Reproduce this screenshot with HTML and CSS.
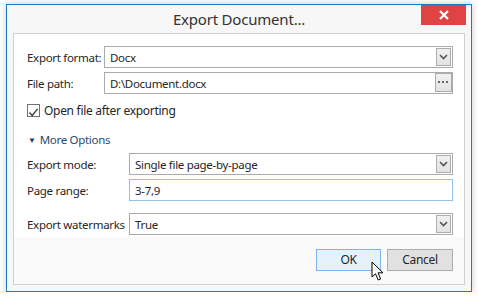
FILE: index.html
```html
<!DOCTYPE html>
<html>
<head>
<meta charset="UTF-8">
<title>Export Document...</title>
<link rel="stylesheet" href="styles.css">
</head>
<body>

<div class="window">
  <div class="titleBar">
    Export Document...
    <div class="closeBtn">
      <svg width="12" height="12" viewBox="0 0 12 12"><path d="M2 2L10 10M10 2L2 10" stroke="#fff" stroke-width="2.2"/></svg>
    </div>
  </div>

  <div class="panel">
    <div class="content">

      <div class="form narrow">
        <label>Export format:</label>
        <div class="field">
          <span>Docx</span>
          <div class="dropBtn"><svg width="9" height="6" viewBox="0 0 9 6"><path d="M1 1L4.5 4.5L8 1" stroke="#555" stroke-width="1.6" fill="none"/></svg></div>
        </div>
        <label>File path:</label>
        <div class="field">
          <span>D:\Document.docx</span>
          <div class="dotsBtn"><svg width="11" height="3" viewBox="0 0 11 3"><rect x="0" y="0" width="2" height="2" fill="#666"/><rect x="4" y="0" width="2" height="2" fill="#666"/><rect x="8" y="0" width="2" height="2" fill="#666"/></svg></div>
        </div>
      </div>

      <div class="checkRow">
        <div class="checkBox"><svg width="11" height="11" viewBox="0 0 11 11"><path d="M1.5 5.5L4.2 8.4L9.6 1.8" stroke="#333" stroke-width="1.3" fill="none"/></svg></div>
        <span>Open file after exporting</span>
      </div>

      <div class="moreRow">
        <span class="arrow">&#9660;</span>
        <span>More Options</span>
      </div>

      <div class="form wide">
        <label>Export mode:</label>
        <div class="field">
          <span>Single file page-by-page</span>
          <div class="dropBtn"><svg width="9" height="6" viewBox="0 0 9 6"><path d="M1 1L4.5 4.5L8 1" stroke="#555" stroke-width="1.6" fill="none"/></svg></div>
        </div>
        <label>Page range:</label>
        <div class="field focused">
          <span>3-7,9</span>
        </div>
        <label class="gapTop">Export watermarks</label>
        <div class="field gapTop">
          <span>True</span>
          <div class="dropBtn"><svg width="9" height="6" viewBox="0 0 9 6"><path d="M1 1L4.5 4.5L8 1" stroke="#555" stroke-width="1.6" fill="none"/></svg></div>
        </div>
      </div>

    </div>

    <div class="footer">
      <div class="btn ok">OK
        <svg class="cursor" width="14" height="21" viewBox="0 0 14 21"><path d="M1 1L1 16L4.5 12.8L7.2 19L9.6 18L7 11.8L12 11.8Z" fill="#fff" stroke="#000" stroke-width="1"/></svg>
      </div>
      <div class="btn">Cancel</div>
    </div>
  </div>
</div>

</body>
</html>
```

FILE: styles.css
```css
body{
  margin:0;
  padding:4px 0 0 6px;
  background:#fff;
  font-family:"Noto Sans", "Open Sans", sans-serif;
  font-size:11.5px;
  letter-spacing:-0.3px;
  color:#262626;
}

.window{
  position:relative;
  width:464px;
  height:286px;
  border:1px solid #1979ca;
  background:#f7f7f7;
  box-shadow:0 0 7px rgba(0,0,0,0.22);
}

.titleBar{
  height:28px;
  line-height:28px;
  text-align:center;
  font-size:15px;
  color:#333;
  letter-spacing:-0.2px;
}

.closeBtn{
  position:absolute;
  top:0;
  right:5px;
  width:45px;
  height:20px;
  background:#e04343;
  display:flex;
  align-items:center;
  justify-content:center;
}

.panel{
  margin:0 6px;
  height:250px;
  border:1px solid #d0d0d0;
  display:flex;
  flex-direction:column;
}

.content{
  background:#fff;
  padding:12px 11px 0 13px;
  height:191px;
}

label{ white-space:nowrap; }

.form{
  display:grid;
  row-gap:4px;
  align-items:center;
}

.narrow{ grid-template-columns:77px 1fr; }
.wide{ grid-template-columns:102px 1fr; }

.field{
  position:relative;
  height:20px;
  border:1px solid #ababab;
  background:#fff;
  display:flex;
  align-items:center;
  padding-left:5px;
  white-space:nowrap;
}

.field.focused{ border-color:#8ec2e8; }

.gapTop{ margin-top:8px; }

.dropBtn{
  position:absolute;
  right:1px;
  top:1px;
  width:13px;
  height:16px;
  border:1px solid #acacac;
  background:linear-gradient(#f0f0f0,#e3e3e3);
  display:flex;
  align-items:center;
  justify-content:center;
}

.dotsBtn{
  position:absolute;
  right:0;
  top:0;
  width:15px;
  height:17px;
  border:1px solid #acacac;
  background:linear-gradient(#f0f0f0,#e3e3e3);
  display:flex;
  align-items:center;
  justify-content:center;
}

.checkRow{
  display:flex;
  align-items:center;
  gap:4px;
  margin-top:10px;
  height:13px;
  font-size:12px;
}

.checkBox{
  width:11px;
  height:11px;
  border:1px solid #707070;
  background:#fff;
}

.moreRow{
  display:flex;
  align-items:center;
  gap:4px;
  margin-top:14px;
  margin-left:1px;
  height:16px;
  color:#2b4a6e;
}

.arrow{
  font-size:8px;
  color:#1e3a5c;
}

.moreRow + .form{ margin-top:6px; }

.footer{
  flex:1;
  background:#fafafa;
  display:flex;
  justify-content:flex-end;
  align-items:flex-start;
  gap:6px;
  padding:12px 11px 0 0;
}

.btn{
  position:relative;
  width:64px;
  height:20px;
  line-height:20px;
  text-align:center;
  border:1px solid #adadad;
  background:#e1e1e1;
  color:#262626;
  font-size:12px;
}

.btn.ok{
  width:63px;
  border-color:#7eb4ea;
  background:#e5f1fb;
}

.cursor{
  position:absolute;
  left:54px;
  top:11px;
}
```
